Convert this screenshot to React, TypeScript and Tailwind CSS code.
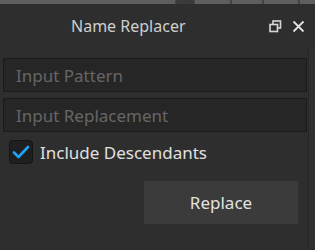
import React from "react";

export default function App() {
  const font = { fontFamily: '"Noto Sans", "Open Sans", sans-serif' };
  return (
    <div className="w-[315px] h-[250px] bg-[#2e2e2e] flex flex-col overflow-hidden" style={font}>
      {/* top strip of viewport */}
      <div className="h-[4px] bg-[#5e5e5e] relative overflow-hidden">
        <div className="absolute left-[175px] top-0 w-[20px] h-[4px] bg-[#3a3a3a] rounded-full" />
        <div className="absolute left-[230px] top-0 w-[2px] h-[4px] bg-[#444]" />
        <div className="absolute left-[262px] top-0 w-[2px] h-[4px] bg-[#444]" />
        <div className="absolute left-[298px] top-0 w-[2px] h-[4px] bg-[#444]" />
      </div>
      {/* title bar */}
      <div className="h-[44px] flex items-center relative">
        <div className="pl-[71px] text-[16px] text-[#cfcfcf] leading-none">Name Replacer</div>
        <div className="absolute right-[10px] top-[16px] flex items-center gap-[10px]">
          <svg width="13" height="13" viewBox="0 0 13 13" fill="none" stroke="#d8d8d8" strokeWidth="1.6">
            <rect x="4" y="1" width="7.5" height="7" />
            <rect x="1" y="4.5" width="7.5" height="7" fill="#2e2e2e" />
          </svg>
          <svg width="13" height="13" viewBox="0 0 13 13" fill="none" stroke="#e2e2e2" strokeWidth="1.8">
            <path d="M1.5 1.5 L11.5 11.5 M11.5 1.5 L1.5 11.5" />
          </svg>
        </div>
      </div>
      {/* body */}
      <div className="flex-1 flex">
        <div className="w-[308px] flex flex-col pl-[3px] pr-[1px] pt-[10px]">
          <div className="h-[34px] w-[304px] border border-[#1b1b1b] bg-[#262626] flex items-center pl-[12px]">
            <span className="text-[17px] text-[#666666] leading-none">Input Pattern</span>
          </div>
          <div className="h-[34px] w-[304px] mt-[6px] border border-[#1b1b1b] bg-[#262626] flex items-center pl-[12px]">
            <span className="text-[17px] text-[#666666] leading-none">Input Replacement</span>
          </div>
          <div className="flex items-center mt-[8px] pl-[6px]">
            <div className="w-[24px] h-[24px] rounded-[4px] bg-[#1f1f1f] border border-[#151515] flex items-center justify-center">
              <svg width="18" height="14" viewBox="0 0 18 14" fill="none" stroke="#1ea6f5" strokeWidth="2.6" strokeLinecap="round" strokeLinejoin="round">
                <path d="M2 7.5 L6.5 12 L16 2" />
              </svg>
            </div>
            <span className="ml-[7px] text-[17px] text-[#e0e0e0] leading-none">Include Descendants</span>
          </div>
          <div className="flex justify-end mt-[17px] pr-[9px]">
            <div className="w-[154px] h-[43px] bg-[#3b3b3b] flex items-center justify-center text-[17px] text-[#e2e2e2] leading-none">
              Replace
            </div>
          </div>
        </div>
        <div className="flex-1 border-l border-[#262626] bg-[#303030]" />
      </div>
    </div>
  );
}
